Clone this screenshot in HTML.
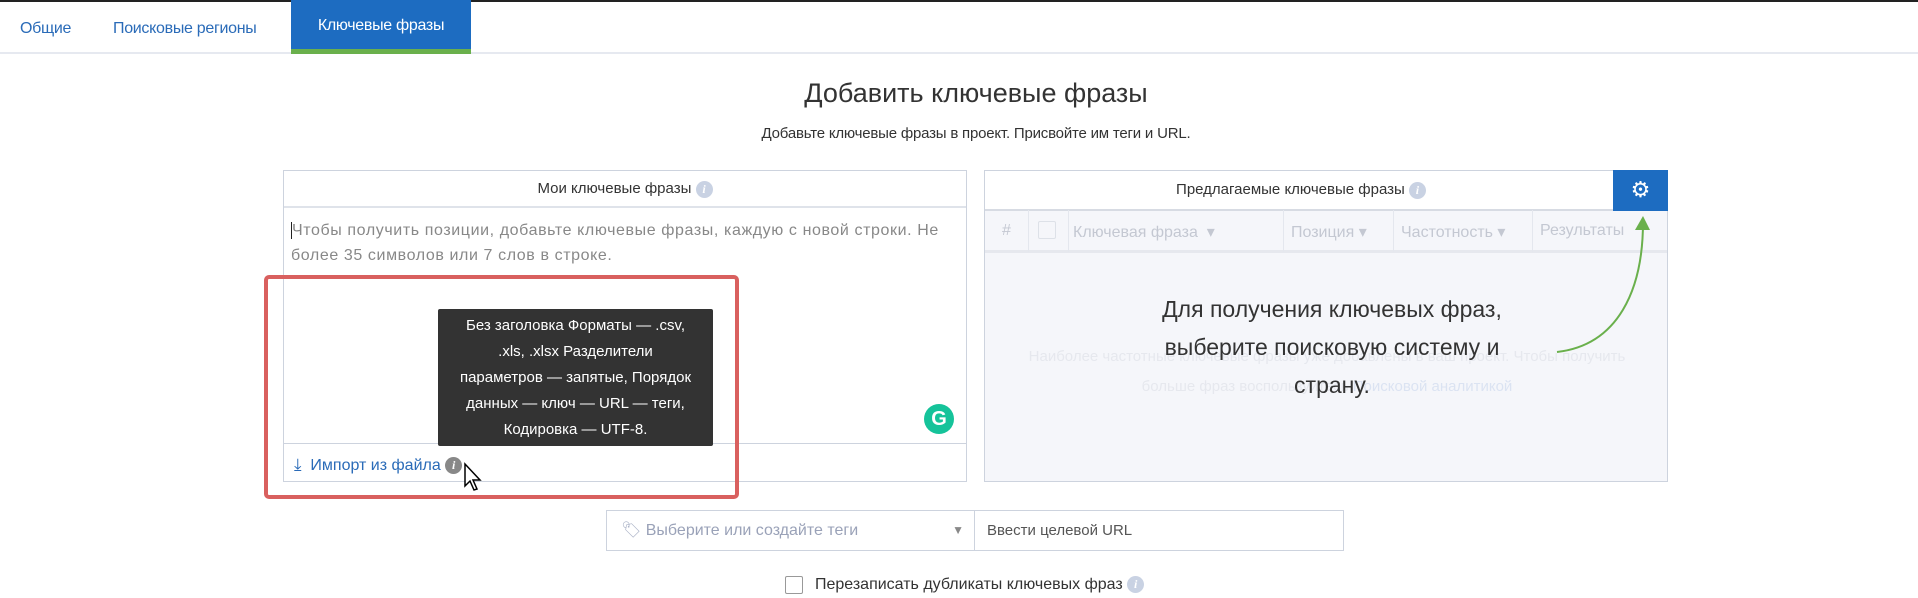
<!DOCTYPE html>
<html><head><meta charset="utf-8"><style>
*{box-sizing:border-box;margin:0;padding:0}
body{width:1918px;height:598px;overflow:hidden;background:#fff;font-family:"Liberation Sans","Noto Sans CJK SC",sans-serif;position:relative;color:#333}
.a{position:absolute}
.tabs{left:0;top:0;width:1918px;height:54px;border-top:2px solid #222;border-bottom:2px solid #e6e9f0}
.tab{position:absolute;top:0;height:52px;line-height:54px;font-size:16px;color:#2a6bb8;letter-spacing:-0.3px}
.info{display:inline-block;width:17px;height:17px;border-radius:50%;background:#c9d2e3;color:#fff;font-size:12px;line-height:17px;text-align:center;font-style:italic;font-weight:bold;vertical-align:middle;font-family:"Liberation Serif",serif}
.th{position:absolute;top:222px;font-size:16px;color:#c4c8d2}
.sep{position:absolute;top:210px;width:1px;height:42px;background:#e4e7ee}
</style></head><body>
<div class="a tabs">
 <div class="tab" style="left:20px">Общие</div>
 <div class="tab" style="left:113px">Поисковые регионы</div>
 <div class="tab" style="left:291px;width:180px;background:#1d6cc1;color:#fff;text-align:center;border-bottom:5px solid #6ab04c;height:54px;line-height:52px;top:-2px">Ключевые фразы</div>
</div>
<div class="a" style="left:0;width:1952px;top:78px;text-align:center;font-size:27px;color:#333">Добавить ключевые фразы</div>
<div class="a" style="left:0;width:1952px;top:125px;text-align:center;font-size:15px;color:#333;letter-spacing:-0.2px">Добавьте ключевые фразы в проект. Присвойте им теги и URL.</div>

<!-- left panel -->
<div class="a" style="left:283px;top:170px;width:684px;height:312px;border:1px solid #cdd3de">
 <div style="height:37px;border-bottom:2px solid #dfe3ea;text-align:center;line-height:36px;font-size:15px">Мои ключевые фразы <span class="info">i</span></div>
 <div style="padding:10px 6px 0 7px;font-size:16px;line-height:25px;color:#888;height:48px;letter-spacing:0.6px;white-space:nowrap"><span style="border-left:1px solid #222">Ч</span>тобы получить позиции, добавьте ключевые фразы, каждую с новой строки. Не<br>более 35 символов или 7 слов в строке.</div>
 <div class="a" style="left:0;top:272px;width:682px;height:1px;background:#cdd3de"></div>
 <div class="a" style="left:10px;top:284px;font-size:16px;color:#2a6bb8"><span style="font-size:17px">⤓</span>&nbsp; Импорт из файла <span class="info" style="background:#888">i</span></div>
</div>
<div class="a" style="left:924px;top:404px;width:30px;height:30px;border-radius:50%;background:#15c39a;color:#fff;font-weight:bold;font-size:20px;text-align:center;line-height:30px">G</div>
<div class="a" style="left:264px;top:275px;width:475px;height:224px;border:4px solid #d9605f;border-radius:5px"></div>
<div class="a" style="left:438px;top:309px;width:275px;height:137px;background:#333;color:#fff;font-size:15px;line-height:26px;text-align:center;padding-top:4px;border-radius:2px">Без заголовка Форматы — .csv,<br>.xls, .xlsx Разделители<br>параметров — запятые, Порядок<br>данных — ключ — URL — теги,<br>Кодировка — UTF-8.</div>
<svg class="a" style="left:463px;top:462px" width="20" height="32" viewBox="0 0 20 32"><path d="M2 2 L2 24 L7 19 L11 28 L14 27 L10 18 L17 18 Z" fill="#fff" stroke="#000" stroke-width="1.5"/></svg>

<!-- right panel -->
<div class="a" style="left:984px;top:170px;width:684px;height:312px;border:1px solid #cdd3de;background:#f5f6fa">
 <div style="height:40px;background:#fff;border-bottom:2px solid #d7dbe3;text-align:center;line-height:38px;font-size:15px;padding-right:50px">Предлагаемые ключевые фразы <span class="info">i</span></div>
 <div class="a" style="right:-1px;top:-1px;width:55px;height:41px;background:#1d6cc1;color:#fff;font-size:22px;text-align:center;line-height:40px">⚙</div>
 <div style="height:42px;border-bottom:3px solid #e6e8ee"></div>
</div>
<div class="th" style="left:1002px">#</div>
<div class="a" style="left:1038px;top:221px;width:18px;height:18px;border:1px solid #dde1e8;border-radius:2px"></div>
<div class="th" style="left:1073px">Ключевая фраза &nbsp;▾</div>
<div class="th" style="left:1291px">Позиция ▾</div>
<div class="th" style="left:1401px">Частотность ▾</div>
<div class="th" style="left:1540px">Результаты</div>
<div class="sep" style="left:1028px"></div><div class="sep" style="left:1068px"></div><div class="sep" style="left:1283px"></div><div class="sep" style="left:1393px"></div><div class="sep" style="left:1532px"></div>
<div class="a" style="left:987px;width:680px;top:342px;text-align:center;font-size:15px;line-height:30px;color:#e6e8ee">Наиболее частотные ключевые фразы уже добавлены в ваш проект. Чтобы получить<br>больше фраз воспользуйтесь <span style="color:#dbe3f2">Поисковой аналитикой</span></div>
<div class="a" style="left:1132px;width:400px;top:290px;text-align:center;font-size:23px;line-height:38px;color:#333">Для получения ключевых фраз,<br>выберите поисковую систему и<br>страну.</div>
<svg class="a" style="left:1548px;top:210px" width="120" height="150" viewBox="0 0 120 150"><path d="M9 142 C70 135 95 80 95 12" fill="none" stroke="#6ab04c" stroke-width="2"/><path d="M87 20 L95 6 L102 20 Z" fill="#6ab04c"/></svg>

<!-- tags / url -->
<div class="a" style="left:606px;top:510px;width:369px;height:41px;border:1px solid #cdd3de;font-size:16px;color:#9aa2b8;line-height:39px;padding-left:14px"><span style="color:#a9b1c6">🏷</span> Выберите или создайте теги<span style="position:absolute;right:10px;color:#888;font-size:12px">▼</span></div>
<div class="a" style="left:974px;top:510px;width:370px;height:41px;border:1px solid #cdd3de;font-size:15px;color:#555;line-height:39px;padding-left:12px">Ввести целевой URL</div>
<div class="a" style="left:785px;top:576px;width:18px;height:18px;border:1px solid #999;border-radius:2px"></div>
<div class="a" style="left:815px;top:576px;font-size:16px;color:#333">Перезаписать дубликаты ключевых фраз <span class="info">i</span></div>
</body></html>
